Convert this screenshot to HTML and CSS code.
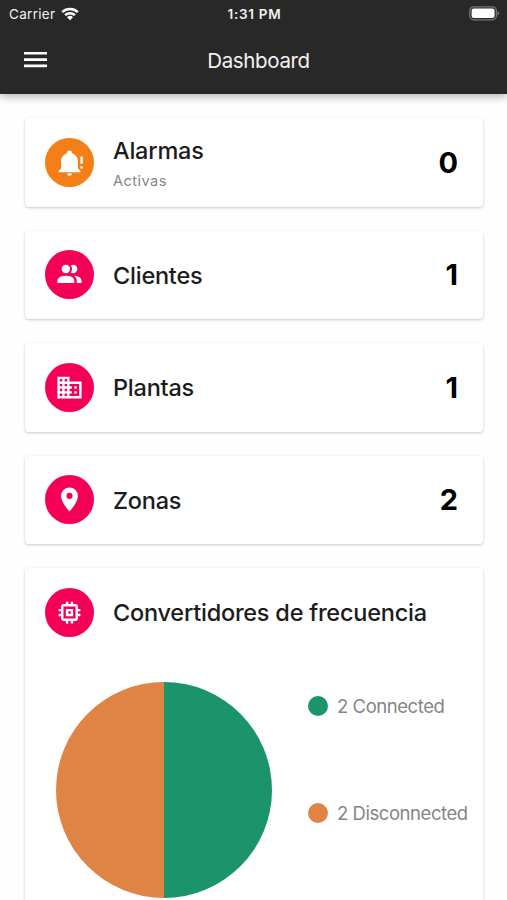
FILE: index.html
```
<!DOCTYPE html>
<html lang="es">
<head>
    <meta charset="UTF-8">
    <meta name="viewport" content="width=device-width, initial-scale=1.0">
    <title>Dashboard</title>
    <link rel="stylesheet" href="styles.css">
</head>
<body>
    <header class="header">
        <div class="status-bar">
            <div class="carrier">
                <span>Carrier</span>
                <svg class="wifi" viewBox="0 0 18 14">
                    <path d="M0.3 4.2A12.6 12.6 0 0 1 17.7 4.2L15.9 6.1A10 10 0 0 0 2.1 6.1Z"/>
                    <path d="M3.2 7.2A8.4 8.4 0 0 1 14.8 7.2L13 9A5.8 5.8 0 0 0 5 9Z"/>
                    <path d="M6 10.2A4.3 4.3 0 0 1 12 10.2L9 13.3Z"/>
                </svg>
            </div>
            <span class="time">1:31 PM</span>
            <div class="battery-wrapper">
                <svg class="battery" viewBox="0 0 31 15">
                    <rect class="battery-case" x="0.8" y="0.8" width="26.6" height="13" rx="4"/>
                    <rect x="2.6" y="2.6" width="23" height="9.4" rx="2.2"/>
                    <path class="battery-tip" d="M28.6 5.2C30.8 5.8 30.8 8.8 28.6 9.4Z"/>
                </svg>
            </div>
        </div>
        <div class="nav-bar">
            <svg class="menu" viewBox="0 0 24 16">
                <path d="M0 0H23V2.6H0ZM0 6.3H23V8.9H0ZM0 12.6H23V15.2H0Z"/>
            </svg>
            <h1>Dashboard</h1>
        </div>
    </header>
    <main class="cards">
        <section class="card">
            <div class="card-title">
                <div class="avatar avatar-alarm">
                    <svg viewBox="0 0 24 24"><path d="M23 7V13H21V7M21 15H23V17H21M12 2A2 2 0 0 0 10 4A2 2 0 0 0 10 4.29C7.12 5.14 5 7.82 5 11V17L3 19V20H21V19L19 17V11C19 7.82 16.88 5.14 14 4.29A2 2 0 0 0 14 4A2 2 0 0 0 12 2M10 21A2 2 0 0 0 12 23A2 2 0 0 0 14 21Z"/></svg>
                </div>
                <div class="labels">
                    <h2>Alarmas</h2>
                    <p>Activas</p>
                </div>
                <span class="count">0</span>
            </div>
        </section>
        <section class="card">
            <div class="card-title">
                <div class="avatar">
                    <svg viewBox="0 0 24 24"><path d="M16 17V19H2V17S2 13 9 13 16 17 16 17M12.5 7.5A3.5 3.5 0 1 0 9 11A3.5 3.5 0 0 0 12.5 7.5M15.94 13A5.32 5.32 0 0 1 18 17V19H22V17S22 13.37 15.94 13M15 4A3.39 3.39 0 0 0 13.07 4.59A5 5 0 0 1 13.07 10.41A3.39 3.39 0 0 0 15 11A3.5 3.5 0 0 0 15 4Z"/></svg>
                </div>
                <div class="labels">
                    <h2>Clientes</h2>
                </div>
                <span class="count">1</span>
            </div>
        </section>
        <section class="card">
            <div class="card-title">
                <div class="avatar">
                    <svg viewBox="0 0 24 24"><path d="M18 15H16V17H18M18 11H16V13H18M20 19H12V17H14V15H12V13H14V11H12V9H20M10 7H8V5H10M10 11H8V9H10M10 15H8V13H10M10 19H8V17H10M6 7H4V5H6M6 11H4V9H6M6 15H4V13H6M6 19H4V17H6M12 7V3H2V21H22V7H12Z"/></svg>
                </div>
                <div class="labels">
                    <h2>Plantas</h2>
                </div>
                <span class="count">1</span>
            </div>
        </section>
        <section class="card">
            <div class="card-title">
                <div class="avatar">
                    <svg viewBox="0 0 24 24"><path d="M12 11.5A2.5 2.5 0 0 1 9.5 9A2.5 2.5 0 0 1 12 6.5A2.5 2.5 0 0 1 14.5 9A2.5 2.5 0 0 1 12 11.5M12 2A7 7 0 0 0 5 9C5 14.25 12 22 12 22C12 22 19 14.25 19 9A7 7 0 0 0 12 2Z"/></svg>
                </div>
                <div class="labels">
                    <h2>Zonas</h2>
                </div>
                <span class="count">2</span>
            </div>
        </section>
        <section class="card">
            <div class="card-title">
                <div class="avatar">
                    <svg viewBox="0 0 24 24"><path d="M17 17H7V7H17M21 11V9H19V7C19 5.89 18.1 5 17 5H15V3H13V5H11V3H9V5H7C5.89 5 5 5.89 5 7V9H3V11H5V13H3V15H5V17A2 2 0 0 0 7 19H9V21H11V19H13V21H15V19H17A2 2 0 0 0 19 17V15H21V13H19V11M13 13H11V11H13M15 9H9V15H15V9Z"/></svg>
                </div>
                <div class="labels">
                    <h2>Convertidores de frecuencia</h2>
                </div>
            </div>
            <div class="chart">
                <svg class="pie" viewBox="0 0 216 216">
                    <path class="connected" d="M108 0A108 108 0 0 1 108 216Z"/>
                    <path class="disconnected" d="M108 0A108 108 0 0 0 108 216Z"/>
                </svg>
                <ul class="legend">
                    <li><span class="dot dot-connected"></span>2 Connected</li>
                    <li><span class="dot dot-disconnected"></span>2 Disconnected</li>
                </ul>
            </div>
        </section>
    </main>
</body>
</html>
```
FILE: styles.css
```
* {
    box-sizing: border-box;
}
body {
    margin: 0;
    height: 900px;
    overflow: hidden;
    background: #fefefe;
    font-family: Inter, "Liberation Sans", sans-serif;
}
h1, h2, p, ul {
    margin: 0;
    padding: 0;
}
svg {
    display: block;
    fill: white;
}
.header {
    height: 94px;
    background: #282828;
    color: #f2f2f2;
    box-shadow: 0 3px 8px rgba(0, 0, 0, 0.28);
}
.status-bar {
    display: grid;
    grid-template-columns: 1fr auto 1fr;
    align-items: center;
    height: 27px;
    padding: 0 7px 0 9px;
    font-size: 13.5px;
}
.carrier {
    display: flex;
    align-items: center;
    gap: 6px;
    letter-spacing: 0.3px;
}
.wifi {
    width: 18px;
    height: 14px;
}
.time {
    font-weight: 600;
    letter-spacing: 0.7px;
}
.battery-wrapper {
    display: flex;
    justify-content: flex-end;
}
.battery {
    width: 31px;
    height: 15px;
}
.battery-case {
    fill: none;
    stroke: #777777;
    stroke-width: 1.3;
}
.battery-tip {
    fill: #777777;
}
.nav-bar {
    display: grid;
    grid-template-columns: 1fr auto 1fr;
    align-items: center;
    height: 66px;
    padding: 0 14px 0 24px;
}
.menu {
    width: 24px;
    height: 16px;
}
.nav-bar h1 {
    font-size: 20.5px;
    font-weight: 400;
    letter-spacing: -0.35px;
}
.cards {
    display: flex;
    flex-direction: column;
    gap: 24px;
    padding: 24px 24px 0 25px;
}
.card {
    flex: none;
    min-height: 88.5px;
    background: white;
    border-radius: 4px;
    box-shadow: 0 1px 3px rgba(0, 0, 0, 0.22);
}
.card-title {
    display: flex;
    align-items: center;
    height: 88px;
    padding: 0 25px 0 20px;
}
.avatar {
    display: flex;
    justify-content: center;
    align-items: center;
    flex: none;
    width: 49px;
    height: 49px;
    margin-right: 19px;
    border-radius: 50%;
    background: #f50057;
}
.avatar-alarm {
    background: #f57f17;
}
.avatar svg {
    width: 29px;
    height: 29px;
    margin-right: 1px;
}
.labels {
    flex: 1;
    padding-top: 2px;
    white-space: nowrap;
}
.labels h2 {
    color: #1c1c1c;
    font-size: 23.5px;
    line-height: 34px;
    font-weight: 500;
    letter-spacing: -0.23px;
}
.labels p {
    color: #858585;
    font-size: 14.5px;
    line-height: 26px;
    letter-spacing: 0.5px;
}
.avatar-alarm + .labels {
    padding-top: 4px;
}
.count {
    color: black;
    font-size: 29px;
    font-weight: 700;
}
.chart {
    display: flex;
    padding: 26px 0 24px 31px;
}
.pie {
    flex: none;
    width: 216px;
    height: 216px;
}
.connected {
    fill: #1b946b;
}
.disconnected {
    fill: #df8445;
}
.legend {
    display: flex;
    flex-direction: column;
    gap: 83px;
    padding: 12px 0 0 36px;
    list-style: none;
    color: #858585;
    font-size: 18.5px;
    line-height: 24px;
    letter-spacing: -0.45px;
}
.legend li {
    display: flex;
    align-items: center;
    gap: 9px;
    white-space: nowrap;
}
.dot {
    width: 20px;
    height: 20px;
    border-radius: 50%;
}
.dot-connected {
    background: #1b946b;
}
.dot-disconnected {
    background: #df8445;
}
```
